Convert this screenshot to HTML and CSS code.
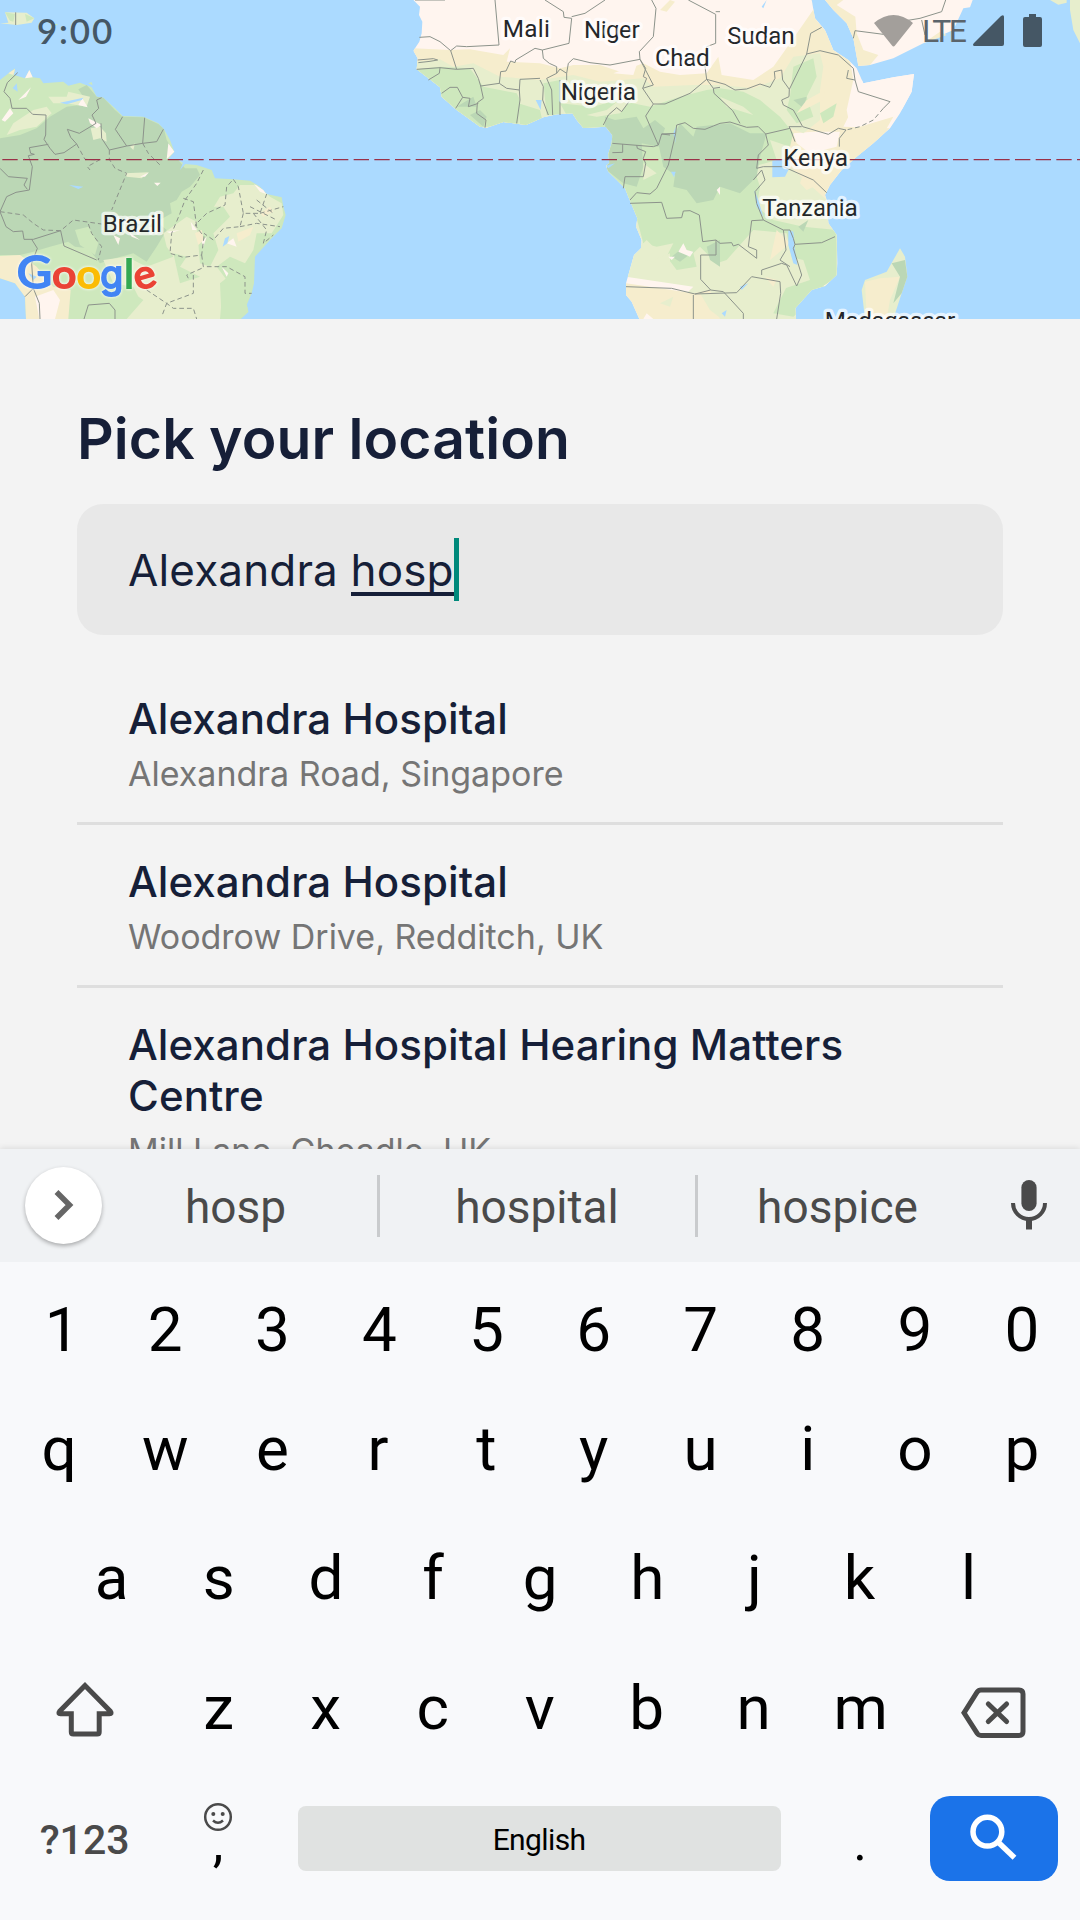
FILE: index.html
```html
<!DOCTYPE html>
<html lang="en">
<head>
<meta charset="utf-8">
<title>Pick your location</title>
<link rel="stylesheet" href="styles.css">
</head>
<body>
<main class="screen">
  <section class="map">
    <svg class="map-art" viewBox="0 0 3240 957">
      <!-- South America -->
      <path class="green" d="M0 240 45 205 42 225 60 230 75 235 88 210 98 232 120 235 130 250 190 245 205 257 240 248 275 262 290 290 310 293 345 325 368 348 430 350 475 370 492 388 510 420 523 455 505 478 535 480 555 492 590 495 635 510 645 535 700 538 750 542 780 560 800 582 845 592 850 620 857 645 845 685 810 720 765 770 762 850 755 880 740 915 745 935 722 957H78L75 890 45 850 0 835Z"/>
      <path class="dark" d="M0 415 60 405 110 385 150 350 200 320 240 315 250 290 235 268 260 255 290 290 310 293 345 330 368 350 430 352 475 372 492 388 500 420 515 445 500 480 535 480 555 505 590 505 600 525 570 560 545 575 530 600 510 610 515 640 470 665 500 690 470 740 440 785 400 760 345 775 300 790 265 745 225 740 205 725 150 740 100 755 60 765 0 765Z"/>
      <path class="pale" d="M145 290 200 290 205 275 270 290 260 320 200 310 160 310ZM20 405 40 370 100 330 140 320 155 340 110 380 60 390ZM272 385 300 380 318 400 320 425 300 415 280 420ZM375 520 445 517 425 535 380 530ZM390 440 405 430 400 450ZM490 700 560 650 600 670 630 640 660 590 700 580 720 555 770 555 810 590 845 610 850 645 815 700 770 700 760 750 735 790 690 770 650 800 680 840 665 900 660 957H370L420 900 400 860 340 850 310 780 380 770 440 800 520 770 500 740Z"/>
      <path class="green" d="M590 670 620 620 670 620 690 650 640 700 655 750 630 800 600 790ZM520 760 560 770 540 800 600 830 540 850ZM660 850 710 810 750 850 740 910 745 935 722 957H665ZM225 690 265 680 295 730 285 765 240 735Z"/>
      <path class="green" d="M205 957 215 860 300 850 345 870 400 880 430 900 380 957Z"/>
      <path class="sand" d="M0 768 60 765 110 800 160 860 212 870 205 957H78L75 890 45 850 0 835ZM585 700 605 690 612 720 595 735ZM710 700 760 680 750 705 715 725ZM780 640 810 620 820 635 790 650ZM25 220 45 207 40 225Z"/>
      <path class="desert" d="M105 890 160 870 180 900 165 957H118ZM75 235 88 210 98 232ZM55 300 93 262 78 290ZM235 315 247 295 263 322ZM265 355 305 375 290 385 270 370ZM5 360 30 325 40 340 15 365ZM500 478 505 430 523 455ZM762 552 790 570 798 582 780 575ZM420 530 447 517 435 530ZM462 548 482 548 472 558ZM605 725 620 710 610 740ZM680 730 700 715 710 740ZM340 705 360 715 355 735ZM385 695 420 720 395 710ZM500 695 540 690 510 700ZM572 665 590 690 577 690ZM665 800 685 820 680 830Z"/>
      <path class="water" d="M38 265 50 250 53 275ZM180 308 250 293 245 300 200 313ZM207 555 250 560 235 567ZM290 505 315 513ZM668 740 675 715 688 708 682 730ZM85 820 110 830 100 840ZM700 900 735 910ZM540 510 550 485 558 490Z"/>
      <path class="pale" d="M15 37 80 38 103 55 95 68 50 75 0 70 25 68Z"/>
      <path class="green" d="M15 37 45 42 40 65 30 62ZM75 42 103 55 80 65ZM150 70 175 73 165 77ZM265 250 275 246 278 256Z"/>
      <path class="border" d="M53 218 22 248 12 275 30 295 36 325 80 325 98 343 138 345 137 405 132 418 150 445 165 463 192 458 230 432 212 412 202 388 238 400 288 370 276 345 296 325 290 300 305 293M88 443 145 433M88 443 92 460 103 463 85 467 97 500 88 570 48 577 20 590 0 635 18 680 40 695 68 693 72 718 100 718 182 692 192 738 290 780M0 505 25 530 82 535 72 555 82 568M368 350 346 388 380 438 328 450 305 415 303 370M434 353 428 430 470 425 490 388M380 438 428 430M95 718 112 745 95 790 100 865 118 910 120 957M252 957 265 915 328 910 345 930 345 957M100 865 75 890M47 37V75"/>
      <path class="region" d="M230 432 255 478 298 480 262 500 270 510M328 450V478L345 505 380 520 335 630M428 430 445 460 485 500M0 635 70 645 100 670 130 690 182 692 220 660 305 672M265 672 275 700 305 740 295 780M610 510 590 550 555 600 540 640 515 700 510 760 550 772 605 765 612 710 585 675 620 640 675 615 680 560 700 538M550 595 580 605 590 680M700 538 715 560 730 640 780 640 800 582M730 640 720 680 670 685 640 720 612 700M780 640 850 620M720 680 770 670 840 680M760 640 800 690 790 730 820 705M750 620 830 660M770 600 820 640M605 765 610 800 680 800 735 830V880L755 880M580 825V880L500 910 485 950M440 870 500 910 520 925 580 925 590 957M605 805 560 825 565 835"/>

      <!-- Africa, Arabia and Madagascar -->
      <g transform="translate(1080 0)">
        <defs>
          <clipPath id="africa"><path d="M160 0 180 20 177 45 187 65 185 100 178 125 160 152 173 175 170 208 205 235 240 262 245 290 290 330 360 380 380 383 430 366 498 375 550 352 590 343 637 340 650 360 670 384 737 380 757 405 755 430 745 462 748 490 738 497 745 515 795 565 805 590 832 655 828 680 845 720 843 745 822 765 798 850 798 885 815 905 838 957H1308L1306 925 1355 870 1395 858 1430 825 1432 790 1430 705 1405 670 1400 600 1395 585 1410 555 1445 510 1490 470 1540 430 1590 385 1620 340 1655 275 1662 222 1600 232 1510 250 1490 205 1465 180 1420 150 1395 90 1365 55 1355 0Z"/></clipPath>
        </defs>
        <g clip-path="url(#africa)">
          <path class="desert" d="M100 0H1700V957H100Z"/>
          <path class="sand" d="M160 145 270 150 330 148 430 165 450 145 440 185 540 190 600 205 640 195 720 195 780 215 850 190 900 215 960 225 1040 220 1075 170 1085 225 1180 240 1240 200 1290 130 1380 0 1355 0 1370 60 1410 110 1420 150 1470 180 1480 240 1490 270 1465 350 1450 380 1590 385 1440 520 1400 600 1440 700 1100 500 700 400 160 400ZM900 30 930 0 945 5 920 35Z"/>
          <path class="desert" d="M1300 400 1360 395 1440 395 1430 440 1350 460 1310 430ZM760 220 830 195 820 225Z"/>
          <path class="pale" d="M160 185 240 178 280 200 340 190 420 230 540 240 640 225 720 245 850 235 880 260 1000 255 1080 255 1180 265 1260 235 1300 170 1380 160 1390 200 1380 270 1380 360 1330 400 1280 380 1290 500 1400 600 1430 700 1430 957H900L1000 860 798 830 700 400 160 400Z"/>
          <path class="green" d="M170 208 240 200 330 205 370 260 420 270 470 280 480 300 475 375 300 385 160 300ZM475 310 540 330 550 375 480 380ZM550 250 600 240 600 345 560 345ZM600 310 700 320 770 300 870 320 960 290 1040 270 1080 265 1150 275 1200 300 1260 350 1300 400 1290 440 1230 420 1250 480 1180 500 1200 560 1190 620 1240 660 1330 680 1430 690V830L1390 870 1300 950 1240 940 1280 860 1310 840 1280 700 1180 690 1100 780 1070 790 1020 740 1000 760 1010 800 950 810 920 770 940 730 890 740 850 730 830 655 740 510 745 380 650 400ZM1290 290 1300 200 1360 175 1370 230 1340 290 1360 350 1310 370 1280 330ZM1380 340 1430 310 1420 350 1390 370Z"/>
          <path class="pale" d="M680 345 740 330 790 290 820 290 780 340 710 350ZM850 490 890 520 850 540ZM860 720 880 740 880 780 930 760 930 800 860 780 830 800 840 740ZM1180 810 1240 760 1330 780 1350 840 1260 870ZM1080 290 1150 320 1180 345 1100 320Z"/>
          <path class="dark" d="M735 350 765 360 830 350 850 385 885 360 915 385 895 440 845 430 850 500 830 560 790 550 740 510 745 462 757 410 735 385ZM895 430 900 400 945 400 960 370 1000 410 1010 380 1110 370 1170 400 1220 400 1200 470 1190 530 1140 580 1080 560 1060 600 1010 610 980 570 940 560 945 525 910 500ZM290 320 340 290 350 320ZM330 345 360 330 380 350 370 380ZM935 770 960 750 1000 755 960 785ZM1040 740 1080 720 1080 800 1050 780ZM1300 300 1340 290 1330 325ZM1315 680 1345 660 1330 695Z"/>
          <path class="sand" d="M798 850 900 865 1000 880 1050 870 1080 957H798ZM1310 340 1340 300 1395 270 1390 300 1350 320ZM1330 520 1400 530 1385 550 1340 570 1320 550ZM1250 690 1290 730 1230 780ZM1215 830 1250 840 1240 860Z"/>
          <path class="pale" d="M900 910 940 890 930 920ZM1020 880 1085 880 1085 957 1050 930Z"/>
          <path class="desert" d="M925 770 945 770 935 780ZM955 755 970 730 980 750 1000 755 990 770ZM1070 570 1080 560V585ZM825 680 845 720 840 745ZM860 940 880 957H850ZM1390 858 1425 835 1400 860ZM1480 240 1520 240 1680 200 1660 300 1560 385 1470 380 1460 330Z"/>
          <path class="sand" d="M1458 395 1500 380 1600 350 1560 420 1440 520 1430 450Z"/>
          <path class="water" d="M527 300H545L542 330ZM933 515 947 515 942 532ZM940 400 947 380 946 430ZM738 497 765 490 745 505ZM1237 482 1283 475 1290 500 1275 530 1237 532ZM1183 570 1195 600 1210 650 1190 620ZM1285 690 1300 695 1305 750 1312 795 1300 790 1285 735ZM1140 860 1165 850 1145 870ZM1085 940 1100 930 1095 950ZM1205 20 1220 0 1210 25Z"/>
        </g>
        <path class="desert" d="M1395 0 1420 30 1460 70 1480 115 1495 198 1530 195 1600 175 1690 130 1780 90 1810 25 1830 22 1838 0Z"/>
        <path class="sand" d="M1395 0 1420 30 1460 70 1480 115 1495 198 1530 195 1555 165 1510 150 1490 100 1486 50 1430 15 1450 0ZM1690 130 1740 95 1760 105Z"/>
        <path class="pale" d="M1620 745 1635 770 1642 830 1625 880 1600 957H1515L1505 870 1515 840 1580 815 1600 780ZM2130 0H2160V130L2140 90 2130 30ZM2070 0 2120 0 2120 8 2095 14Z"/>
        <path class="sand" d="M1515 845 1560 835 1620 830 1590 900 1580 957H1520Z"/>
        <path class="dark" d="M1595 790 1635 780 1642 830 1625 880 1600 910 1620 830Z"/>
        <path class="border" d="M165 0H255M178 112 210 110 240 125 272 152 290 138 320 140 417 135 405 0M272 152 290 208 340 205 355 235 362 258 418 250 422 215 438 213 452 183 465 188 467 180 525 145 547 150 627 130 635 55 612 52 610 35 555 0M635 50 675 40 735 0M547 150 550 175 568 190 590 200V220L560 235M540 235 480 238 478 270 440 265 418 250M478 270 480 300 470 370M540 240 550 260 548 300 565 345M560 235 575 270 578 345M590 220 600 207 620 220 620 245M600 240V345M620 220 625 190 640 176 690 188 750 195 840 178 838 155 880 110 888 25 875 0M840 178 857 205 850 230 860 235 848 265 880 312 857 348 895 435 880 440 757 430M840 178 880 255 848 265M170 208 240 203 290 208M240 203 238 220 205 240M173 180 220 176 233 180 210 184 175 188M362 258 370 295 352 308 350 340 378 360 375 383M245 280 270 262 292 262 308 292 287 325M308 292 330 295 325 320 355 310M730 375 745 345 770 323 785 335 807 305M757 458 788 457V432M895 435 905 402 947 400 925 495 890 565 870 582 830 578 810 600M830 435 832 445 857 455 850 475 857 490 850 530 795 530 790 565M947 400 950 375 975 368 1000 385 1035 388 1060 378 1080 370 1110 366 1160 382 1195 380 1217 402 1290 385 1287 380 1325 380M880 312 915 312 990 280 1040 238 1060 265 1080 262M985 0 1067 43V130L1040 140 1035 200 1040 238 1095 253 1125 270 1160 267 1200 252 1230 262 1245 235 1243 215 1265 210 1268 240 1288 268 1340 162 1352 100 1385 82M1067 35H1080M1060 265 1062 280 1118 332 1140 370M1288 268 1287 290 1265 300 1270 315 1300 330 1328 380 1405 403 1435 385 1458 390 1438 415V440M1340 162 1380 152 1435 165 1480 205 1485 240 1460 235 1465 210M1485 240 1495 275 1590 305 1570 325M1217 402 1225 435 1195 465 1190 505 1210 500 1270 500 1360 540 1400 578M1180 540 1205 510 1215 540 1185 575 1190 610 1210 660 1270 690 1290 690 1300 715 1305 733 1385 728 1425 710M810 610 905 607 920 655 965 653 970 633 990 632 1018 645 1028 725 1068 720 1080 730 1115 728 1120 738 1135 733 1190 775V750L1165 740 1175 662 1210 660M1068 720V765H1022V838L1052 870 1005 882 935 865 798 860M1005 882 1130 878 1175 830 1260 845 1262 880 1250 957M1052 870 1090 875 1150 940V957M1000 957V885M1205 825V810L1265 790 1280 795 1310 858 1325 825 1300 745 1305 733M1270 690 1278 750 1260 780 1290 800M1290 385 1305 425M1480 115 1485 92 1570 103 1620 65 1680 55 1745 35 1757 0M1685 60 1695 105M905 402 930 405"/>
        <path class="region" d="M1570 325 1540 360 1500 380 1458 390"/>
      </g>
      <path class="equator" d="M7 479H3240"/>

      <g class="labels">
        <text x="308" y="696" textLength="178">Brazil</text>
        <text x="1508" y="110" textLength="142">Mali</text>
        <text x="1752" y="114" textLength="167">Niger</text>
        <text x="1965" y="197" textLength="164">Chad</text>
        <text x="1682" y="299" textLength="226">Nigeria</text>
        <text x="2182" y="131" textLength="202">Sudan</text>
        <text x="2350" y="498" textLength="194">Kenya</text>
        <text x="2287" y="647" textLength="286">Tanzania</text>
        <text x="2474" y="986" textLength="392">Madagascar</text>
      </g>
      <g class="logo">
        <text class="logo-cap blue" x="50" y="864" textLength="106" lengthAdjust="spacingAndGlyphs">G</text>
        <text class="red" x="157" y="863" textLength="72" lengthAdjust="spacingAndGlyphs">o</text>
        <text class="yellow" x="230" y="863" textLength="72" lengthAdjust="spacingAndGlyphs">o</text>
        <text class="logo-g blue" x="301" y="863">g</text>
        <text class="logo-l grn" x="373" y="863">l</text>
        <text class="red" x="402" y="863" textLength="65" lengthAdjust="spacingAndGlyphs" transform="rotate(-16 437 832)">e</text>
      </g>
    </svg>
    <header class="status">
      <span class="time">9:00</span>
      <svg class="wifi" viewBox="0 0 39 32"><path d="M0 8Q19.500-8 39 8L21 30.500Q19.500 32.500 18 30.500Z"/></svg>
      <span class="network">LTE</span>
      <svg class="signal" viewBox="0 0 31 31"><path d="M1 31Q-1 30 1 28L28 1Q31-1 31 2V29Q31 31 29 31Z"/></svg>
      <svg class="battery" viewBox="0 0 19 33"><path d="M6 0H13V3H17Q19 3 19 5V31Q19 33 17 33H2Q0 33 0 31V5Q0 3 2 3H6Z"/></svg>
    </header>
  </section>

  <section class="picker">
    <h1 class="title">Pick your location</h1>
    <div class="field"><span class="query">Alexandra <span class="composing">hosp</span></span><span class="caret"></span></div>
    <ul class="results">
      <li class="result"><div class="name">Alexandra Hospital</div><div class="place">Alexandra Road, Singapore</div></li>
      <li class="result"><div class="name">Alexandra Hospital</div><div class="place">Woodrow Drive, Redditch, UK</div></li>
      <li class="result"><div class="name">Alexandra Hospital Hearing Matters Centre</div><div class="place">Mill Lane, Cheadle, UK</div></li>
    </ul>
  </section>

  <section class="keyboard">
    <div class="suggestions">
      <span class="expand"><svg viewBox="0 0 77 77"><path d="M31.500 25 44.500 38 31.500 51"/></svg></span>
      <span class="word first">hosp</span>
      <i class="bar"></i>
      <span class="word">hospital</span>
      <i class="bar"></i>
      <span class="word third">hospice</span>
      <svg class="mic" viewBox="0 0 40 52"><rect x="12.400" y="0" width="15.200" height="31" rx="7.600"/><path class="arc" d="M4 23A16 16 0 0 0 36 23"/><path d="M17 39H23V49.500H17Z"/></svg>
    </div>
    <div class="keys numbers"><span class="one">1</span><span>2</span><span>3</span><span>4</span><span>5</span><span>6</span><span>7</span><span>8</span><span>9</span><span>0</span></div>
    <div class="keys upper"><span class="q">q</span><span>w</span><span>e</span><span class="r">r</span><span>t</span><span>y</span><span>u</span><span>i</span><span>o</span><span>p</span></div>
    <div class="keys home"><span>a</span><span>s</span><span>d</span><span>f</span><span>g</span><span>h</span><span>j</span><span class="k">k</span><span>l</span></div>
    <div class="keys lower">
      <span class="icon"><svg class="shift" viewBox="0 0 60 60"><path d="M30 7.500 4.500 33.500Q2.800 35.700 5.500 35.700H16.300V54Q16.300 56 18.300 56H42.200Q44.200 56 44.200 54V35.700H54.500Q57.200 35.700 55.500 33.500Z"/></svg></span>
      <span>z</span><span>x</span><span>c</span><span>v</span><span>b</span><span>n</span><span>m</span>
      <span class="icon"><svg class="erase" viewBox="0 0 70 60"><path d="M4 34.800 17.200 14Q18.600 12 21 12H59Q63 12 63 16V53.400Q63 57.400 59 57.400H21Q18.600 57.400 17.200 55.400Z"/><path class="cross" d="M28.300 26 46.600 43.500M46.600 26 28.300 43.500"/></svg></span>
    </div>
    <div class="keys bottom">
      <span class="symbols">?123</span>
      <span class="comma"><svg class="smile" viewBox="0 0 30 30"><circle cx="15" cy="15" r="12.800"/><path d="M10 18.500Q15 23 20 18.500"/><circle class="eye" cx="10.300" cy="12" r="2"/><circle class="eye" cx="19.700" cy="12" r="2"/></svg><b>,</b></span>
      <span class="space">English</span>
      <span class="period">.</span>
      <span class="search"><svg viewBox="0 0 128 85"><circle cx="57.400" cy="35.700" r="14.400"/><path d="M68 46 84.500 61.800"/></svg></span>
    </div>
  </section>
</main>
</body>
</html>
```
FILE: styles.css
```css
* { box-sizing: border-box; }
body { margin: 0; background: #f3f3f3; }
.screen {
  width: 1080px;
  height: 1920px;
  overflow: hidden;
  display: flex;
  flex-direction: column;
  font-family: Inter, sans-serif;
}

/* Map */
.map { position: relative; height: 319px; flex: none; background: #abdaff; overflow: hidden; }
.map-art { display: block; width: 1080px; height: 319px; }
.green { fill: #cee8bd; }
.dark { fill: #bbd7b5; }
.pale { fill: #e7eecd; }
.sand { fill: #f6edcd; }
.desert { fill: #fff5ef; }
.water { fill: #abdaff; }
.border, .region { fill: none; stroke: #8c938b; stroke-width: 3; stroke-linejoin: round; }
.region { stroke-dasharray: 14 9; }
.equator { stroke: #9a3048; stroke-width: 4; stroke-dasharray: 46 16; }
.labels {
  font: 73px Roboto, sans-serif;
  fill: #24272a;
  stroke: rgba(255, 255, 255, .7);
  stroke-width: 20;
  stroke-linejoin: round;
  paint-order: stroke;
}
.logo {
  font: 400 117px Lato, sans-serif;
  stroke-width: 6;
  filter: drop-shadow(0 0 5px rgba(255, 255, 255, .7)) drop-shadow(0 0 3px rgba(255, 255, 255, .5));
}
.logo-cap { font-size: 134px; }
.logo-g { font-family: Inter, sans-serif; font-size: 112px; }
.logo-l { font-family: Inter, sans-serif; font-size: 118px; }
.blue { fill: #4285f4; stroke: #4285f4; }
.red { fill: #ea4335; stroke: #ea4335; }
.yellow { fill: #fbbc05; stroke: #fbbc05; }
.grn { fill: #34a853; stroke: #34a853; }

.status {
  position: absolute;
  top: 0;
  left: 0;
  width: 1080px;
  height: 61px;
  padding: 0 38px 0 37px;
  display: flex;
  align-items: center;
  color: #455765;
}
.time { font: 600 35px Lato, sans-serif; letter-spacing: 1.8px; margin: 0 auto 2px 0; }
.status svg { fill: #455765; flex: none; }
.status .wifi { width: 39px; height: 32px; fill: #a39f9b; }
.network { width: 43px; margin: 0 8px 0 9px; font: 32px Roboto, sans-serif; letter-spacing: -2.7px; color: #5b646b; white-space: nowrap; }
.signal { width: 31px; height: 31px; margin-right: 19px; }
.battery { width: 19px; height: 33px; }

/* Location picker */
.picker { height: 830px; flex: none; overflow: hidden; padding: 85px 77px 0; color: #161f38; }
.title { margin: 0; font-size: 57px; line-height: 70px; font-weight: 600; letter-spacing: .08px; height: 100px; }
.field {
  height: 131px;
  border-radius: 26px;
  background: #e8e8e8;
  padding-left: 51px;
  display: flex;
  align-items: center;
  font-size: 44px;
  font-weight: 430;
  letter-spacing: .15px;
}
.composing { box-shadow: inset 0 -4px #161f38; display: inline-block; line-height: 51px; }
.caret { width: 5px; height: 63px; background: #00897b; }
.results { list-style: none; margin: 27px 0 0; padding: 0; }
.result { padding: 31px 51px 27px; height: 163px; border-bottom: 3px solid #dedede; }
.result:last-child { height: 216px; border-bottom: 0; }
.name { font-size: 42px; line-height: 51px; font-weight: 470; letter-spacing: .08px; }
.place { font-size: 34px; line-height: 42px; margin-top: 9px; color: #757575; }

/* Keyboard */
.keyboard { position: relative; height: 771px; flex: none; background: #f8f9fb; box-shadow: 0 -1px 6px rgba(0, 0, 0, .1); font-family: Roboto, sans-serif; color: #000; }
.suggestions { height: 113px; margin-bottom: 12px; background: #f0f2f4; display: flex; align-items: center; padding-left: 25px; color: #4a4a4a; font-size: 46px; }
.expand { width: 77px; height: 77px; border-radius: 50%; background: #fff; box-shadow: 0 2px 4px rgba(0, 0, 0, .3); }
.expand svg { display: block; fill: none; stroke: #666; stroke-width: 5.5; }
.word { width: 315px; padding: 2px 1px 0 0; text-align: center; }
.word.first { width: 275px; padding-right: 8px; }
.word.third { width: 280px; }
.bar { width: 3px; height: 62px; background: #c9cbcd; }
.mic { width: 40px; height: 52px; margin-left: 31px; fill: #4a4a4a; }
.arc { fill: none; stroke: #4a4a4a; stroke-width: 4; }

.keys { display: grid; grid-template-columns: repeat(10, 107.1px); padding-left: 4.6px; align-items: center; font-size: 62px; height: 130px; text-align: center; }
.keys svg { display: block; margin: 0 auto; fill: none; stroke: #4a4a4a; stroke-width: 5; }
.numbers { height: 111px; }
.numbers .one { padding-left: 8px; }
.upper { height: 128px; }
.upper span { padding-bottom: 2px; }
.upper .q { padding-left: 2px; }
.upper .r { padding-right: 3px; }
.home { padding-left: 58.2px; }
.home span { padding-bottom: 2px; }
.home .k { padding-right: 4px; }
.lower { grid-template-columns: 160.6px repeat(7, 107px) 161px; }
.lower span { padding-bottom: 2px; }
.lower .icon { padding: 0; }
.shift { width: 60px; height: 60px; }
.erase { width: 70px; height: 60px; }
.cross { stroke-linecap: round; }
.bottom { grid-template-columns: 160px 107px 535px 107px 128px; height: 131px; }
.symbols { font-size: 41px; font-weight: 500; color: #4a4a4a; padding-top: 2px; }
.comma { display: flex; flex-direction: column; height: 85px; padding: 6px 0 0; }
.keys .smile { width: 30px; height: 30px; stroke-width: 2.5; }
.keys .eye { fill: #4a4a4a; stroke: none; }
.comma b { font-weight: 400; font-size: 54px; line-height: 40px; margin-top: -9px; }
.space { margin: 0 26px; height: 65px; line-height: 67px; border-radius: 8px; background: #e0e2e1; font-size: 30px; letter-spacing: -.6px; }
.period { font-size: 52px; padding-top: 8px; }
.search { width: 128px; height: 85px; margin-left: 16px; border-radius: 20px; background: #1b73e9; }
.keys .search svg { stroke: #fff; stroke-width: 5.5; }
```
